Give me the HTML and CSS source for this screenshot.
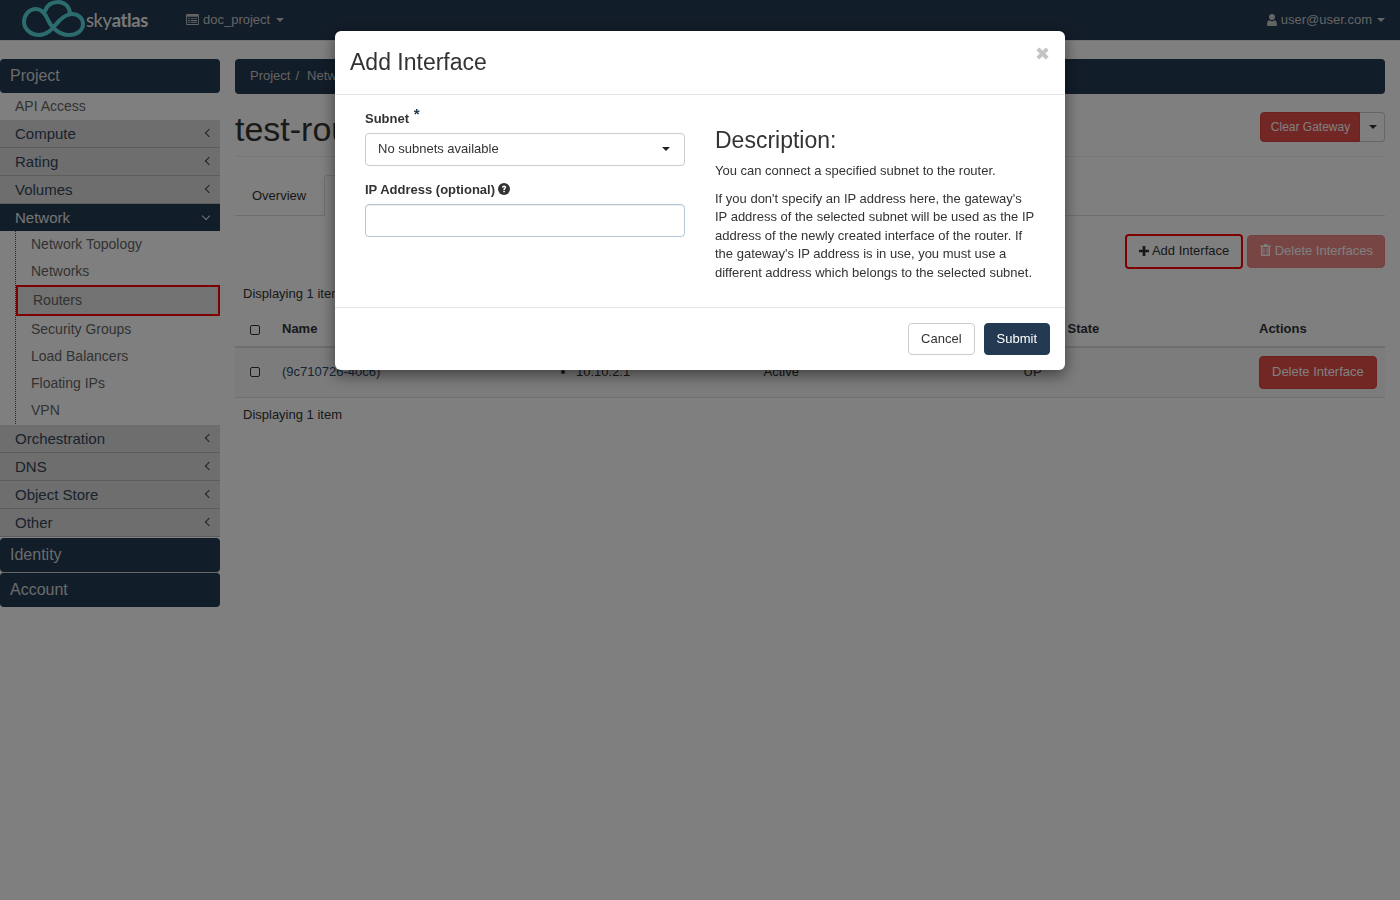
FILE: index.html
```html
<!DOCTYPE html>
<html lang="en">
<head>
<meta charset="utf-8">
<title>Add Interface</title>
<link rel="stylesheet" href="styles.css">
</head>
<body>
<header class="topbar">
  <a class="brand">
    <svg class="brand-mark" width="64" height="40" viewBox="20 0 64 40"><path d="M44 11C46 5 51 2 57 2C64 2 69 7 69 14" fill="none" stroke="#58d8de" stroke-width="4" stroke-linecap="round"/><path d="M38 35C48 35 52 27 58 21C62 17 66 14 71 14C77 14 82 18 82 24C82 31 75 35 68 35C58 35 50 27 47 20C44 13 40 9 35 9C28 9 23 15 23 22C23 29 30 35 38 35Z" fill="none" stroke="#58d8de" stroke-width="4"/></svg>
    <span class="brand-text"><span class="brand-light">sky</span><span class="brand-bold">atlas</span></span>
  </a>
  <a class="top-link project">
    <svg class="ico" width="13" height="11" viewBox="0 0 14 12"><path fill-rule="evenodd" d="M1 0h12a1 1 0 0 1 1 1v10a1 1 0 0 1-1 1H1a1 1 0 0 1-1-1V1a1 1 0 0 1 1-1zm0 3v8h12V3zm1 1.500h2v1H2zm3 0h7v1H5zm-3 2h2v1H2zm3 0h7v1H5zm-3 2h2v1H2zm3 0h7v1H5z" fill="currentColor"/></svg>
    doc_project <span class="caret"></span>
  </a>
  <a class="top-link user">
    <svg class="ico" width="10" height="12" viewBox="0 0 10 12"><circle cx="5" cy="3" r="3" fill="currentColor"/><path d="M0 10.500C0 8 1 6.200 2.500 6.200C3.200 6.900 4 7.200 5 7.200C6 7.200 6.800 6.900 7.500 6.200C9 6.200 10 8 10 10.500C10 11.500 9.300 12 8.500 12H1.500C.7 12 0 11.500 0 10.500Z" fill="currentColor"/></svg>
    user@user.com <span class="caret"></span>
  </a>
</header>

<div class="layout">
  <nav class="sidebar">
    <div class="panel-head">Project</div>
    <a class="nav-plain">API Access</a>
    <a class="nav-group">Compute<span class="chev left"></span></a>
    <a class="nav-group">Rating<span class="chev left"></span></a>
    <a class="nav-group">Volumes<span class="chev left"></span></a>
    <a class="nav-group open">Network<span class="chev down"></span></a>
    <ul class="subnav">
      <li>Network Topology</li>
      <li>Networks</li>
      <li class="current">Routers</li>
      <li>Security Groups</li>
      <li>Load Balancers</li>
      <li>Floating IPs</li>
      <li>VPN</li>
    </ul>
    <a class="nav-group">Orchestration<span class="chev left"></span></a>
    <a class="nav-group">DNS<span class="chev left"></span></a>
    <a class="nav-group">Object Store<span class="chev left"></span></a>
    <a class="nav-group">Other<span class="chev left"></span></a>
    <div class="panel-head second">Identity</div>
    <div class="panel-head third">Account</div>
  </nav>

  <main class="content">
    <div class="crumbs"><span>Project</span><span class="sep">/</span><span>Network</span><span class="sep">/</span><span>Routers</span></div>
    <div class="page-head">
      <h1>test-router</h1>
      <div class="btn-group">
        <button class="btn red small">Clear Gateway</button><button class="btn plain toggle"><span class="caret"></span></button>
      </div>
    </div>
    <div class="tabs">
      <a class="tab">Overview</a>
      <a class="tab active">Interfaces</a>
      <a class="tab">Static Routes</a>
    </div>
    <div class="actions">
      <button class="btn plain outlined"><svg class="ico" width="10" height="10" viewBox="0 0 11 11"><path d="M4 0h3v4h4v3H7v4H4V7H0V4h4z" fill="currentColor"/></svg> Add Interface</button>
      <button class="btn red faded"><svg class="ico" width="11" height="12" viewBox="0 0 11 12"><path fill-rule="evenodd" d="M3.500 1.500 4.200 0h2.600l.7 1.500H11v1h-1V11a1 1 0 0 1-1 1H2a1 1 0 0 1-1-1V2.500H0v-1zM2.500 3v7.500h6V3zm1 1h1v5.500h-1zm3 0h1v5.500h-1z" fill="currentColor"/></svg> Delete Interfaces</button>
    </div>
    <div class="count">Displaying 1 item</div>
    <table class="grid">
      <thead>
        <tr>
          <th class="c-check"><span class="check"></span></th>
          <th class="c-name">Name</th>
          <th class="c-ip">Fixed IPs</th>
          <th class="c-status">Status</th>
          <th class="c-admin">Admin State</th>
          <th class="c-actions">Actions</th>
        </tr>
      </thead>
      <tbody>
        <tr>
          <td class="c-check"><span class="check"></span></td>
          <td class="c-name link">(9c710726-40c6)</td>
          <td class="c-ip"><ul class="ips"><li>10.10.2.1</li></ul></td>
          <td class="c-status">Active</td>
          <td class="c-admin">UP</td>
          <td class="c-actions"><button class="btn red row-btn">Delete Interface</button></td>
        </tr>
      </tbody>
    </table>
    <div class="count after">Displaying 1 item</div>
  </main>
</div>

<div class="backdrop"></div>
<div class="modal">
  <div class="modal-head">
    <h3>Add Interface</h3>
    <span class="close">&#10006;</span>
  </div>
  <div class="modal-body">
    <form class="form-col">
      <label class="lbl">Subnet <sup class="req">*</sup></label>
      <div class="select">No subnets available<span class="caret"></span></div>
      <label class="lbl ip-lbl">IP Address (optional)
        <svg class="help" width="12" height="12" viewBox="0 0 12 12"><circle cx="6" cy="6" r="6" fill="#333"/><path d="M3.900 4.600C4 3.300 4.900 2.500 6.100 2.500C7.300 2.500 8.200 3.300 8.200 4.300C8.200 5.700 6.800 5.700 6.800 6.900H5.300C5.300 5.100 6.600 5.100 6.600 4.400C6.600 4.100 6.400 3.900 6 3.900C5.600 3.900 5.400 4.200 5.300 4.700ZM5.300 7.700H6.800V9.200H5.300Z" fill="#fff"/></svg>
      </label>
      <input class="text-input" type="text">
    </form>
    <div class="desc-col">
      <h3>Description:</h3>
      <p>You can connect a specified subnet to the router.</p>
      <p>If you don't specify an IP address here, the gateway's IP address of the selected subnet will be used as the IP address of the newly created interface of the router. If the gateway's IP address is in use, you must use a different address which belongs to the selected subnet.</p>
    </div>
  </div>
  <div class="modal-foot">
    <button class="btn plain cancel">Cancel</button>
    <button class="btn navy">Submit</button>
  </div>
</div>
</body>
</html>
```
FILE: styles.css
```css
* { box-sizing: border-box; }
html, body { height: 100%; }
body {
  margin: 0;
  background: #fff;
  color: #333;
  font: 13px/1.43 "Liberation Sans", Arial, sans-serif;
  overflow: hidden;
}
a { color: inherit; text-decoration: none; }

.topbar {
  height: 41px;
  background: #233a52;
  border-bottom: 1px solid #e7e7e7;
  display: flex;
  align-items: center;
  color: #c8c8c8;
  position: relative;
}
.brand { display: flex; align-items: center; width: 186px; height: 40px; padding-left: 21px; overflow: hidden; flex: none; }
.brand-mark { flex: none; }
.brand-text { font: 19px/1 Lato, sans-serif; letter-spacing: -.4px; margin: -2px 0 0 1px; transform: scaleX(.97); transform-origin: left; color: #f0f0f0; white-space: nowrap; }
.brand-bold { font-weight: 700; }
.top-link { display: flex; align-items: center; gap: 4px; }
.project .caret { margin-left: 2px; }
.user { margin-left: auto; margin-right: 15px; }
.ico { flex: none; }
.caret {
  display: inline-block;
  width: 0; height: 0;
  border-top: 4px solid currentColor;
  border-left: 4px solid transparent;
  border-right: 4px solid transparent;
  margin-left: 1px;
  vertical-align: middle;
}

.layout { display: flex; padding-top: 18px; }
.sidebar { width: 220px; flex: none; font-size: 15px; }
.panel-head {
  height: 34px;
  background: #233a52;
  color: #d6d6d6;
  font-size: 16px;
  line-height: 33px;
  padding-left: 10px;
  border-radius: 4px;
}
.panel-head.second { margin-top: 1px; }
.panel-head.third { height: 35px; border-top: 1px solid #ccc; }
.nav-plain { display: block; height: 27px; line-height: 27px; padding-left: 15px; font-size: 14px; color: #666; }
.nav-group {
  display: flex;
  align-items: center;
  justify-content: space-between;
  height: 28px;
  padding: 0 10px 0 15px;
  background: #dcdcdc;
  border-bottom: 1px solid #bbb;
  color: #33455a;
  font-size: 15px;
}
.nav-group.open { background: #233a52; color: #e8e8e8; border-bottom: 0; height: 27px; }
.chev { width: 6px; height: 6px; border-left: 1px solid currentColor; border-bottom: 1px solid currentColor; display: block; }
.chev.left { transform: rotate(45deg); margin: -2px -2px 0 0; }
.chev.down { transform: rotate(-45deg); margin: -3px 1px 0 0; }
.subnav {
  list-style: none;
  margin: 0 0 1px 15px;
  padding: 0;
  border-left: 1px dotted #555;
  height: 193px;
  font-size: 14px;
  color: #666;
}
.subnav li { height: 27px; line-height: 27px; padding-left: 15px; }
.subnav li.current {
  height: 31px;
  line-height: 26px;
  margin-bottom: 0;
  padding-left: 15px;
  border: 2px solid #f00;
  background: #e4e4e4;
}

.content { flex: 1; margin: 0 15px; min-width: 0; }
.crumbs {
  height: 35px;
  background: #233a52;
  border-radius: 4px;
  color: #c8c8c8;
  line-height: 33px;
  padding-left: 15px;
  display: flex;
}
.sep { margin: 0 5px 0 5px; padding-right: 3px; }
.page-head {
  display: flex;
  justify-content: space-between;
  align-items: flex-start;
  height: 63px;
  margin-top: 0;
  padding-top: 18px;
  border-bottom: 1px solid #eee;
}
h1 { margin: -1px 0 0; font-size: 34px; font-weight: 400; line-height: 36px; color: #333; }
.btn {
  font: 13px/1.43 "Liberation Sans", Arial, sans-serif;
  border-radius: 4px;
  border: 1px solid transparent;
  padding: 6px 12px;
  cursor: pointer;
}
.btn.red { background: #e54e4b; color: #fff; border-color: #dd4441; }
.btn.plain { background: #fff; color: #333; border-color: #ccc; }
.btn.navy { background: #233a52; color: #fff; border-color: #233a52; height: 32px; padding: 0 12px; }
.btn-group { display: flex; height: 30px; font-size: 12px; }
.btn.small { font-size: 12px; height: 30px; width: 100px; padding: 2px 0 0 1px; border-radius: 4px 0 0 4px; }
.toggle { width: 25px; height: 30px; padding: 0; border-radius: 0 4px 4px 0; border-left: 0 !important; }
.tabs {
  display: flex;
  height: 59px;
  padding: 18px 0 0 0;
  border-bottom: 1px solid #ddd;
}
.tab { height: 41px; padding: 11px 17px 0 16px; border: 1px solid transparent; }
.tab.active { background: #fff; border-color: #ddd #ddd #fff; margin-bottom: -1px; border-radius: 4px 4px 0 0; height: 41px; }
.actions { display: flex; justify-content: flex-end; align-items: center; gap: 4px; padding-top: 17px; height: 53px; }
.actions .ico { vertical-align: -1px; }
.btn.outlined { border: 2px solid #f00; height: 35px; padding: 0 13px 0 12px; white-space: nowrap; width: 118px; }
.btn.faded { opacity: .65; height: 33px; width: 138px; padding: 0 0 0 1px; white-space: nowrap; }
.count { padding-left: 8px; margin-top: 15px; height: 19px; line-height: 19px; }
.count.after { margin-top: 7px; }
.grid { width: 100%; border-collapse: collapse; table-layout: fixed; margin-top: 7px; }
.grid th { text-align: left; height: 37px; padding: 3px 0 0 8px; border-bottom: 2px solid #ddd; font-weight: 700; vertical-align: middle; }
.grid td { height: 50px; padding: 0 0 0 8px; border-bottom: 1px solid #ddd; background: #f9f9f9; vertical-align: middle; }
.grid .c-check { width: 39px; padding-left: 15px; }
.c-name { width: 271px; }
.c-ip { width: 210.5px; }
.c-status { width: 260px; }
.c-admin { width: 235.5px; }
.link { color: #2a4a6b; }
.check { display: block; width: 10px; height: 10px; border: 1px solid #333; border-radius: 2px; background: #fff; }
.ips { margin: 0; padding-left: 23px; }
.row-btn { height: 33px; padding: 0 12px; white-space: nowrap; }

.backdrop { position: fixed; inset: 0; background: rgba(0, 0, 0, .5); }
.modal {
  position: fixed;
  left: 335px;
  top: 31px;
  width: 730px;
  height: 339px;
  background: #fff;
  border-radius: 6px;
  box-shadow: 0 5px 15px rgba(0, 0, 0, .5);
}
.modal-head { position: relative; height: 64px; padding: 15px; border-bottom: 1px solid #e5e5e5; }
.modal-head h3 { margin: 0; font-size: 23px; font-weight: 400; line-height: 32px; color: #333; }
.close { position: absolute; right: 15px; top: 10px; font-size: 18px; line-height: 26px; color: #c4c4c4; font-family: "DejaVu Sans", sans-serif; font-weight: 700; }
.modal-body { display: flex; height: 212px; padding: 0 30px; }
.form-col { width: 320px; flex: none; padding-top: 14px; display: flex; flex-direction: column; }
.lbl { font-weight: 700; height: 19px; line-height: 19px; margin-bottom: 5px; white-space: nowrap; }
.req { font-size: 15px; line-height: 0; color: #233a52; position: relative; top: 1px; left: 1px; }
.help { vertical-align: -1px; margin-left: -1px; }
.ip-lbl { margin-top: 14px; margin-bottom: 5px; }
.select {
  height: 33px;
  border: 1px solid #ccc;
  border-radius: 4px;
  padding: 0 14px 1px 12px;
  color: #333;
  display: flex;
  justify-content: space-between;
  align-items: center;
}
.select .caret { color: #222; }
.text-input { height: 33px; border: 1px solid #b3c7da; border-radius: 4px; width: 100%; outline: 0; box-shadow: inset 0 1px 1px rgba(0, 0, 0, .075); background: #fff; }
.desc-col { margin-left: 30px; width: 322px; padding-top: 28px; }
.desc-col h3 { margin: 0 0 5px; font-size: 23px; font-weight: 400; line-height: 34px; color: #333; }
.desc-col p { margin: 0 0 9px; line-height: 18.5px; }
.modal-foot { display: flex; justify-content: flex-end; gap: 9px; padding: 15px; border-top: 1px solid #e5e5e5; height: 63px; }
.cancel { height: 32px; padding: 0 12px; }
```
